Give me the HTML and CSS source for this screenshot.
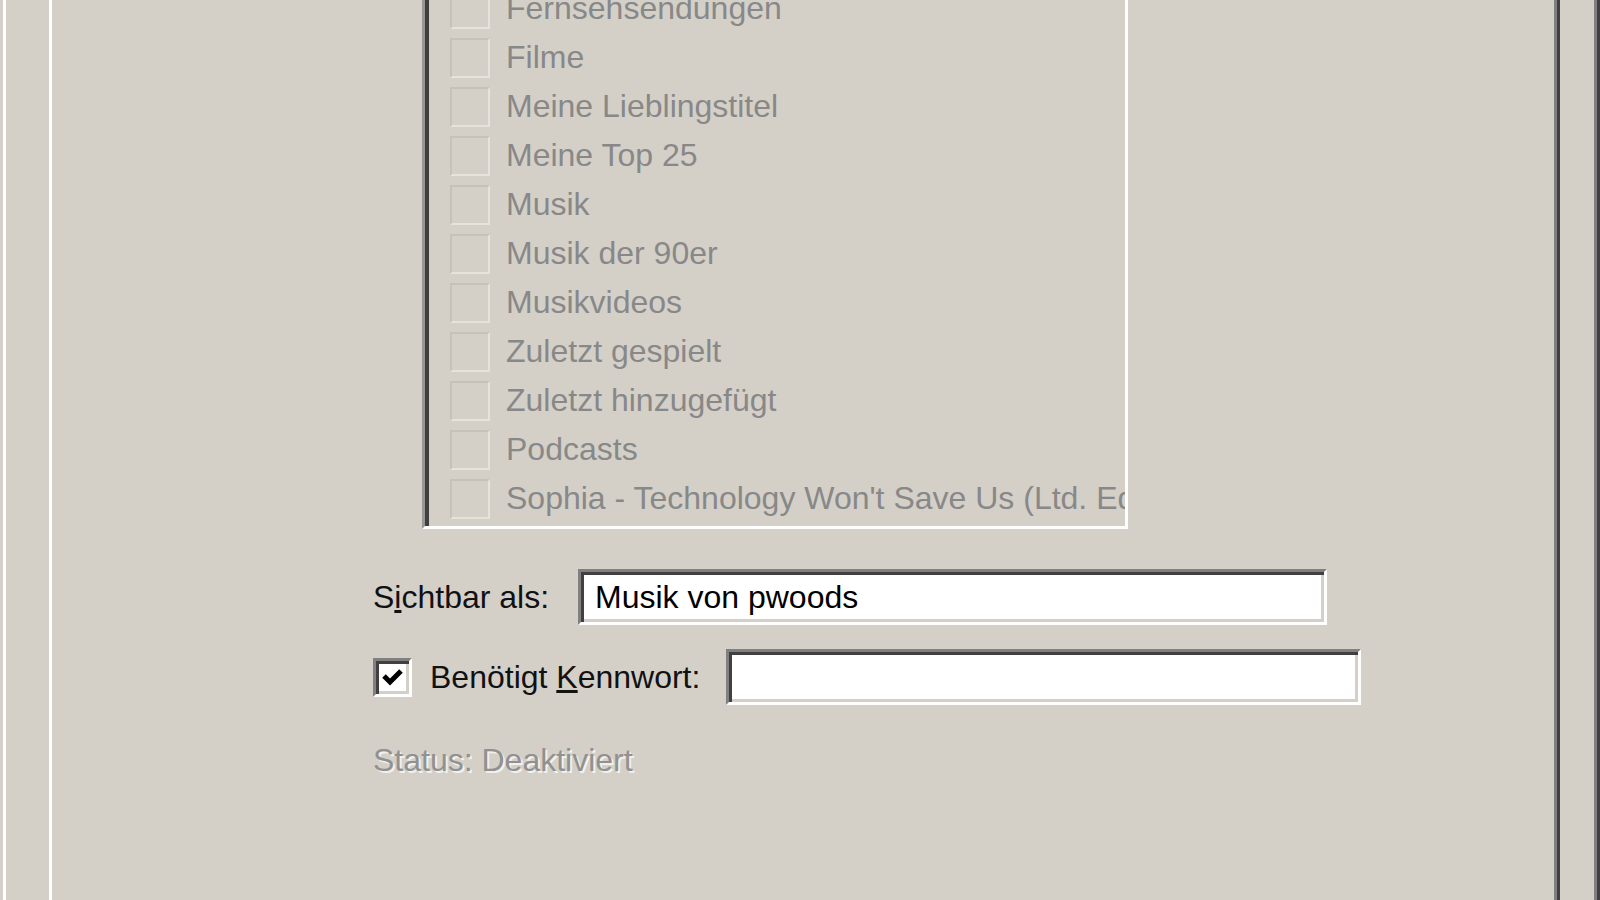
FILE: index.html
```html
<!DOCTYPE html>
<html lang="de">
<head>
    <meta charset="UTF-8">
    <title>Freigabe</title>
    <link rel="stylesheet" href="styles.css">
</head>
<body>
    <div class="window">
        <div class="tabpage">
            <div class="form">
                <div class="listbox">
                    <ul class="items">
                        <li><span class="box"></span>Fernsehsendungen</li>
                        <li><span class="box"></span>Filme</li>
                        <li><span class="box"></span>Meine Lieblingstitel</li>
                        <li><span class="box"></span>Meine Top 25</li>
                        <li><span class="box"></span>Musik</li>
                        <li><span class="box"></span>Musik der 90er</li>
                        <li><span class="box"></span>Musikvideos</li>
                        <li><span class="box"></span>Zuletzt gespielt</li>
                        <li><span class="box"></span>Zuletzt hinzugefügt</li>
                        <li><span class="box"></span>Podcasts</li>
                        <li><span class="box"></span>Sophia - Technology Won't Save Us (Ltd. Edition)</li>
                    </ul>
                </div>

                <div class="row first">
                    <label class="label">S<u>i</u>chtbar als:</label>
                    <div class="edit name">Musik von pwoods</div>
                </div>

                <div class="row">
                    <span class="check">
                        <svg width="27" height="27" viewBox="0 0 27 27">
                            <polyline points="5,12 11,18 22,7" fill="none" stroke="#000" stroke-width="5" stroke-linejoin="miter"/>
                        </svg>
                    </span>
                    <label class="label pw">Benötigt <u>K</u>ennwort:</label>
                    <div class="edit password"></div>
                </div>

                <div class="status">Status: Deaktiviert</div>
            </div>
        </div>
    </div>
</body>
</html>
```

FILE: styles.css
```css
body {
    margin: 0;
    padding: 0;
    background-color: #d4d0c8;
    font-family: "Liberation Sans", Arial, sans-serif;
    font-size: 32px;
    color: #111;
    overflow: hidden;
}

.window {
    height: 100vh;
    display: flex;
    padding: 0 37px 0 46px;
    background-color: #d4d0c8;
    border-left: 3px solid #d4d0c8;
    border-right: 3px solid #404040;
    box-shadow: inset 3px 0 0 #fff, inset -3px 0 0 #808080;
}

.tabpage {
    flex: 1;
    border-left: 3px solid #fff;
    border-right: 3px solid #404040;
    box-shadow: inset -3px 0 0 #808080;
}

.form {
    padding-left: 321px;
}

/* disabled checked list */
.listbox {
    width: 694px;
    margin: -22px 0 0 49px;
    border-style: solid;
    border-width: 3px;
    border-color: #9a9892 #fff #fff #9a9892;
    box-shadow: inset 4px 3px 0 #404040, inset -3px -3px 0 #d4d0c8;
    padding: 3px;
    overflow: hidden;
}

.items {
    list-style: none;
    margin: 0;
    padding: 0;
}

.items li {
    height: 49px;
    display: flex;
    align-items: center;
    white-space: nowrap;
    color: #888;
}

.box {
    width: 36px;
    height: 36px;
    flex-shrink: 0;
    margin: 0 16px 0 22px;
    border: 2px solid;
    border-color: #c6c2ba #e6e3dd #e6e3dd #c6c2ba;
}

.row {
    display: flex;
    align-items: center;
    height: 56px;
}

.row.first {
    margin-top: 40px;
}

.row + .row {
    margin-top: 24px;
}

.label {
    width: 205px;
    flex-shrink: 0;
}

.label.pw {
    width: auto;
    margin-left: 18px;
    margin-right: 26px;
}

.edit {
    height: 50px;
    line-height: 50px;
    padding: 0 8px 0 14px;
    background-color: #fff;
    border-style: solid;
    border-width: 3px;
    border-color: #808080 #fff #fff #808080;
    box-shadow: inset 3px 3px 0 #404040, inset -3px -3px 0 #d4d0c8;
    color: #000;
}

.edit.name {
    width: 721px;
}

.edit.password {
    width: 607px;
}

.check {
    width: 27px;
    height: 27px;
    flex-shrink: 0;
    padding: 3px;
    background-color: #fff;
    border-style: solid;
    border-width: 3px;
    border-color: #808080 #fff #fff #808080;
    box-shadow: inset 3px 3px 0 #404040, inset -3px -3px 0 #d4d0c8;
    display: flex;
}

.check svg {
    display: block;
}

.status {
    margin-top: 36px;
    line-height: 38px;
    color: #919191;
    text-shadow: 2px 2px 0 rgba(255, 255, 255, 0.7);
}
```
